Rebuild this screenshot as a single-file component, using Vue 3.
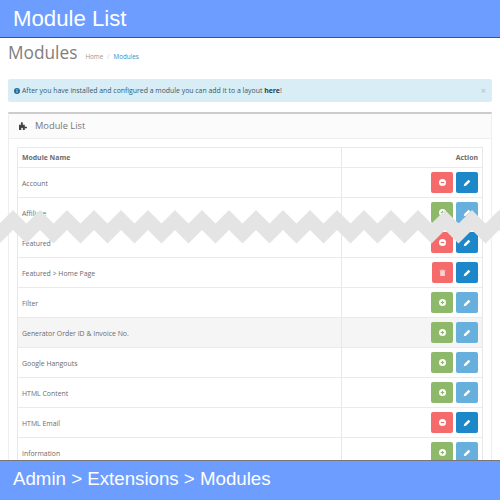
<template>
  <div class="page">
    <header class="banner top">Module List</header>

    <div class="title-row">
      <h1>Modules</h1>
      <span class="crumb">Home</span>
      <span class="sep">/</span>
      <span class="crumb current">Modules</span>
    </div>

    <div class="alert">
      <svg class="info" viewBox="0 0 16 16">
        <circle cx="8" cy="8" r="8" fill="#1f6f96" />
        <rect x="6.800" y="3" width="2.400" height="2.400" fill="#d9edf7" />
        <rect x="6.800" y="6.600" width="2.400" height="6" fill="#d9edf7" />
      </svg>
      <span>After you have installed and configured a module you can add it to a layout <b>here</b>!</span>
      <span class="close">×</span>
    </div>

    <section class="panel">
      <div class="panel-head">
        <svg class="puzzle" viewBox="0 0 14 14">
          <path d="M0 6h3.200V4.600a1.700 1.700 0 1 1 2.600 0V6H9v3h1.200a1.400 1.400 0 1 1 0 2.200H9V14H6v-1.400a1.400 1.400 0 1 0-2.400 0V14H0z" fill="#444" />
        </svg>
        <span>Module List</span>
      </div>

      <div class="table">
        <div class="row head">
          <div class="name">Module Name</div>
          <div class="action">Action</div>
        </div>
        <div v-for="m in modules" :key="m.name" class="row" :class="{ hover: m.hover }">
          <div class="name">{{ m.name }}</div>
          <div class="action">
            <button class="btn" :class="m.kind">
              <svg v-if="m.kind === 'install'" viewBox="0 0 12 12">
                <circle cx="6" cy="6" r="6" fill="#fff" />
                <path d="M5 3h2v2h2v2H7v2H5V7H3V5h2z" fill="#8fb96a" />
              </svg>
              <svg v-else-if="m.kind === 'remove'" viewBox="0 0 12 12">
                <circle cx="6" cy="6" r="6" fill="#fff" />
                <rect x="3" y="5" width="6" height="2" fill="#f56b6b" />
              </svg>
              <svg v-else viewBox="0 0 12 12">
                <path d="M4.500 1.500V.8h3v.7H11v1.400H1V1.500zM2 3.600h8V12H2z" fill="#fbd0d0" />
              </svg>
            </button>
            <button class="btn" :class="m.kind === 'install' ? 'edit-off' : 'edit'">
              <svg class="pencil" viewBox="0 0 12 12">
                <path d="M8.400 1l2.600 2.600-6.500 6.500L1 11l.9-3.500z" fill="#fff" />
              </svg>
            </button>
          </div>
        </div>
      </div>
    </section>

    <svg class="zigzag" viewBox="0 0 500 36" preserveAspectRatio="none">
      <polygon :points="zigzagPoints" fill="#e4e4e4" />
    </svg>

    <footer class="banner bottom">Admin &gt; Extensions &gt; Modules</footer>
  </div>
</template>

<script setup>
const modules = [
  { name: 'Account', kind: 'remove' },
  { name: 'Affiliate', kind: 'install' },
  { name: 'Featured', kind: 'remove' },
  { name: 'Featured > Home Page', kind: 'delete' },
  { name: 'Filter', kind: 'install' },
  { name: 'Generator Order ID & Invoice No.', kind: 'install', hover: true },
  { name: 'Google Hangouts', kind: 'install' },
  { name: 'HTML Content', kind: 'install' },
  { name: 'HTML Email', kind: 'remove' },
  { name: 'Information', kind: 'install' },
]

// band of zigzag, one tooth is 27px wide
const top = []
const bottom = []
for (let x = -14; x <= 514; x += 13.5) {
  const up = Math.round((x + 14) / 13.5) % 2 === 0
  top.push(`${x},${up ? 0 : 13.5}`)
  bottom.unshift(`${x},${up ? 20 : 33.5}`)
}
const zigzagPoints = [...top, ...bottom].join(' ')
</script>

<style>
html, body {
  margin: 0;
  background: #fff;
}
</style>

<style scoped>
.page {
  position: relative;
  width: 500px;
  height: 500px;
  overflow: hidden;
  font-family: "Open Sans", sans-serif;
  color: #6b6b6b;
  background: #fff;
}
.banner {
  background: #6d9eff;
  color: #fff;
  font-family: "Liberation Sans", sans-serif;
  padding-left: 13px;
  box-sizing: border-box;
}
.top {
  height: 38px;
  font-size: 22.200px;
  line-height: 37px;
  border-bottom: 1px solid #3c5578;
}
.bottom {
  position: absolute;
  left: 0;
  right: 0;
  bottom: 0;
  height: 40px;
  font-size: 18.700px;
  line-height: 36px;
  border-top: 1px solid #777;
}
.title-row {
  display: flex;
  align-items: baseline;
  padding: 3px 8px 0;
  height: 41px;
  box-sizing: border-box;
}
h1 {
  margin: 0 8px 0 0;
  font-size: 17.300px;
  font-weight: 400;
  color: #808080;
}
.crumb {
  font-size: 6.300px;
  color: #999;
}
.sep {
  font-size: 6.300px;
  color: #ccc;
  margin: 0 4px;
}
.current {
  color: #3a8cc4;
}
.alert {
  margin: 0 8px;
  height: 23px;
  display: flex;
  align-items: center;
  padding: 0 6px;
  background: #d9edf7;
  border-radius: 2px;
  font-size: 6.900px;
  color: #2f5a70;
}
.alert b {
  color: #1f3f50;
}
.info {
  width: 6px;
  height: 6px;
  margin-right: 2px;
}
.close {
  margin-left: auto;
  font-size: 9px;
  color: #aabfca;
}
.panel {
  margin: 10px 8px 0;
  border: 1px solid #eee;
  border-top: 2px solid #ccc;
}
.panel-head {
  height: 24px;
  box-sizing: content-box;
  display: flex;
  align-items: center;
  gap: 7px;
  padding-left: 10px;
  background: #fbfbfb;
  border-bottom: 1px solid #eee;
  font-size: 9.300px;
  line-height: 20px;
  color: #777;
}
.puzzle {
  width: 9px;
  height: 9px;
  margin-bottom: 2px;
}
.table {
  margin: 8px 8px 0;
  border: 1px solid #e8e8e8;
}
.row {
  display: grid;
  grid-template-columns: 323px 1fr;
  height: 30px;
  box-sizing: border-box;
  border-bottom: 1px solid #eaeaea;
  font-size: 6.900px;
}
.row:not(.head) .name {
  padding-top: 1px;
}
.row.head {
  height: 20px;
  font-weight: 700;
}
.row.hover {
  background: #f5f5f5;
}
.name, .action {
  display: flex;
  align-items: center;
  padding: 0 4px;
}
.action {
  justify-content: flex-end;
  gap: 3px;
  border-left: 1px solid #e8e8e8;
}
.btn {
  width: 22px;
  height: 21px;
  padding: 0;
  border: 0;
  border-radius: 2px;
  display: flex;
  align-items: center;
  justify-content: center;
}
.btn svg {
  width: 7px;
  height: 7px;
}
.btn svg.pencil {
  width: 8px;
  height: 8px;
}
.install { background: #8fb96a; }
.remove { background: #f56b6b; }
.delete { background: #f56b6b; width: 21px; }
.edit { background: #1c87c9; }
.edit-off { background: #67afdc; }
.zigzag {
  position: absolute;
  left: 0;
  top: 210px;
  width: 500px;
  height: 36px;
}
</style>
